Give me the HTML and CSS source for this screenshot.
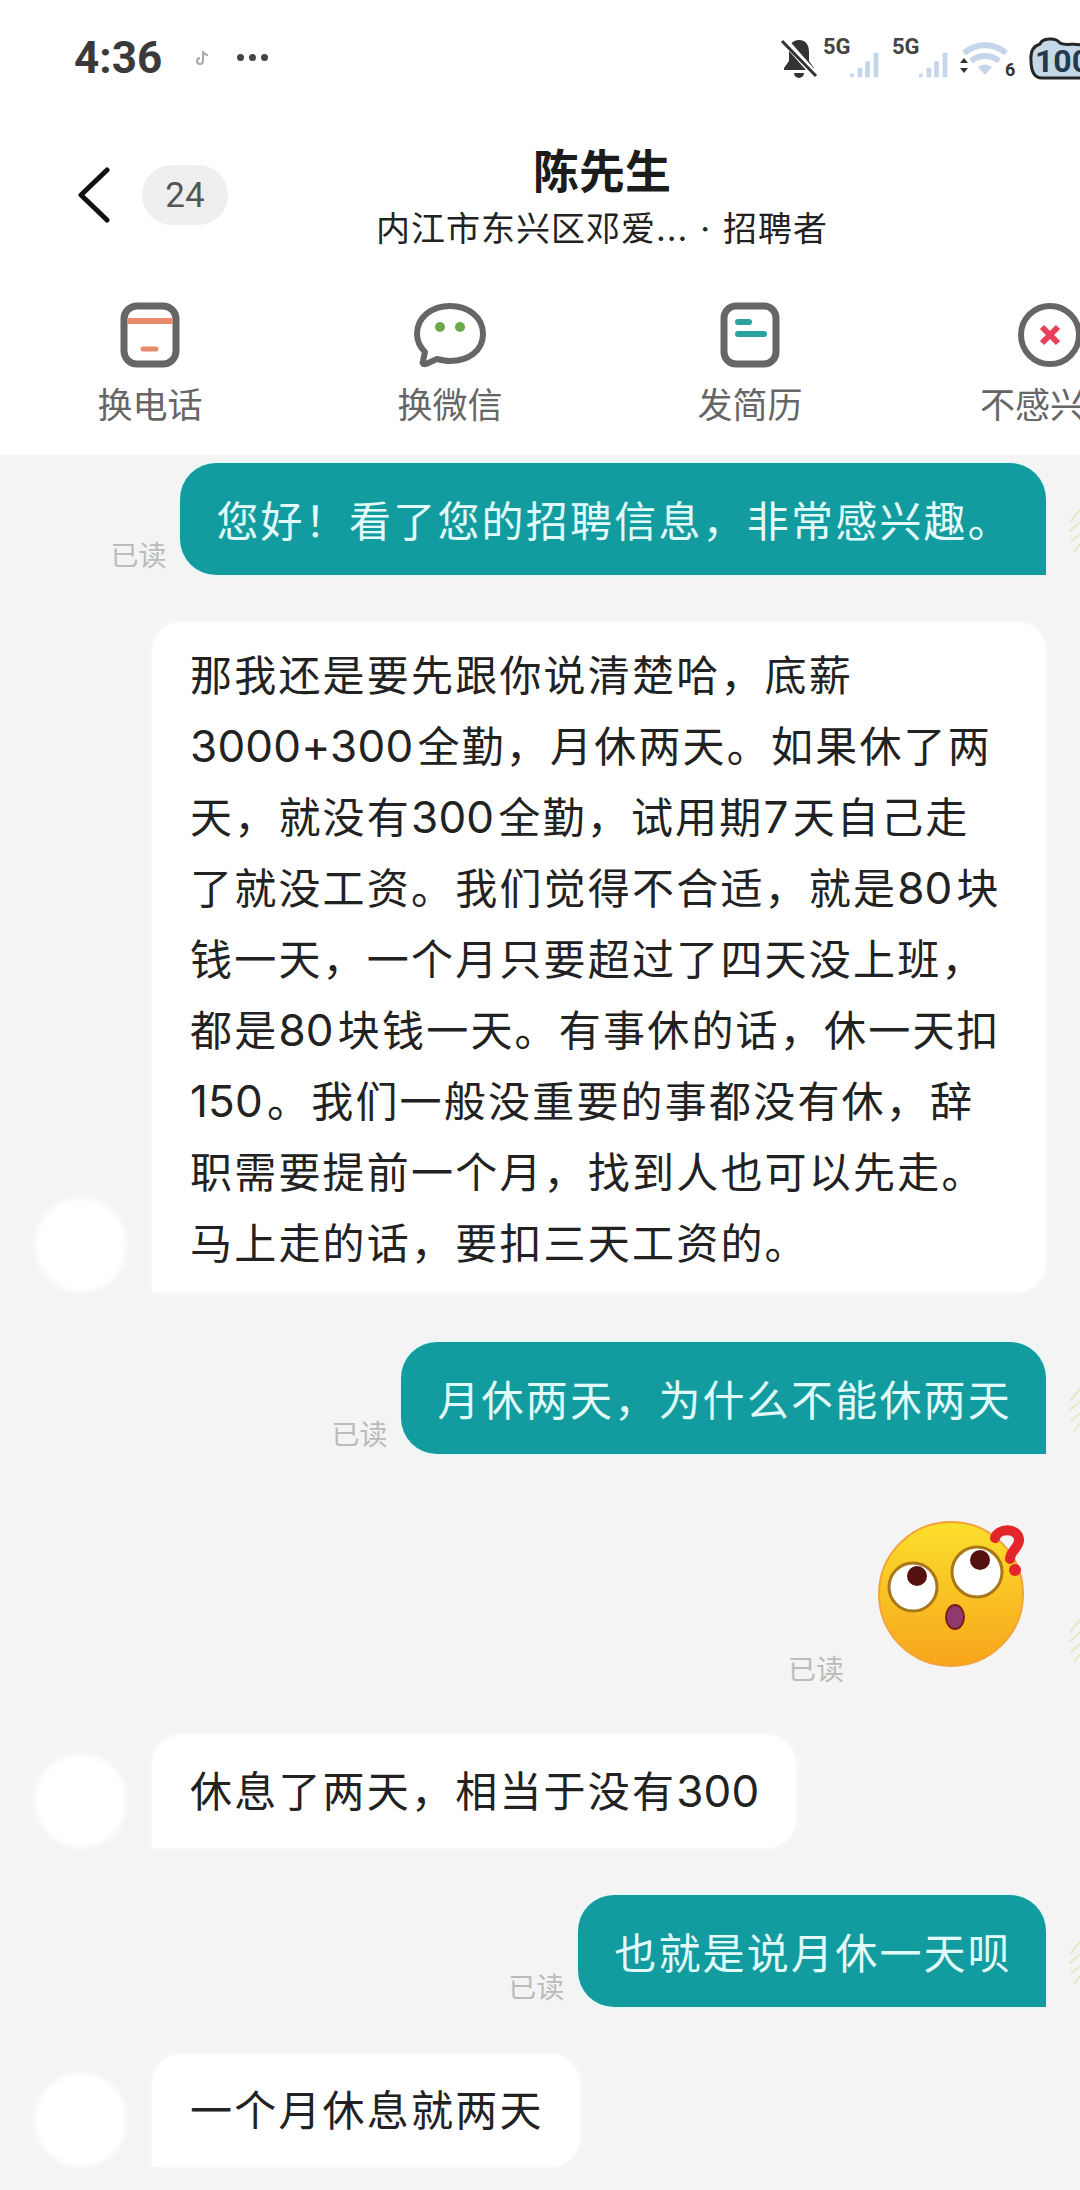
FILE: index.html
```html
<!DOCTYPE html>
<html lang="zh-CN">

<head>
    <meta charset="UTF-8">
    <meta name="viewport" content="width=device-width, initial-scale=1.0">
    <title>陈先生</title>
    <link rel="stylesheet" href="styles.css">
</head>

<body>
    <!-- 状态栏 -->
    <div class="status">
        <span class="time">4:36</span>
        <svg class="note" width="16" height="18" viewBox="0 0 16 18">
            <path d="M9 2v10a3 3 0 1 1-3-3M9 2c1 3 3 4 5 4" fill="none" stroke="#aaa" stroke-width="2"/>
        </svg>
        <span class="dots"><i></i><i></i><i></i></span>
        <div class="status-right">
            <svg class="bell" width="38" height="42" viewBox="0 0 36 42">
                <path d="M18 3c-7 0-10 5-10 12v9l-5 7v2h30v-2l-5-7v-9c0-7-3-12-10-12z" fill="#333"/>
                <path d="M13 36a5 5 0 0 0 10 0z" fill="#333"/>
                <path d="M2 2l32 36" stroke="#fff" stroke-width="7"/>
                <path d="M1 4l34 35" stroke="#333" stroke-width="3"/>
            </svg>
            <div class="sig">
                <span>5G</span>
                <svg width="33" height="28" viewBox="0 0 33 28">
                    <path d="M2 23h4v4H2zM10 17h5v10h-5zM18 10h5v17h-5zM27 1h5v26h-5z" fill="#c6d6ea"/>
                </svg>
            </div>
            <div class="sig">
                <span>5G</span>
                <svg width="33" height="28" viewBox="0 0 33 28">
                    <path d="M2 23h4v4H2zM10 17h5v10h-5zM18 10h5v17h-5zM27 1h5v26h-5z" fill="#c6d6ea"/>
                </svg>
            </div>
            <svg class="wifi" width="58" height="38" viewBox="0 0 58 38">
                <path d="M7 14a32 32 0 0 1 42 0M14 22a22 22 0 0 1 28 0" fill="none" stroke="#c6d6ea" stroke-width="6"/>
                <path d="M21 28a11 11 0 0 1 14 0l-7 8z" fill="#c6d6ea"/>
                <path d="M3 24l4-5 4 5zM3 29l4 5 4-5z" fill="#333"/>
                <text x="48" y="37" class="wifi-num">6</text>
            </svg>
            <div class="battery">
                <svg width="52" height="44" viewBox="0 0 52 44">
                    <path d="M3 24C2 14 6 10 12 8 14 2 28 1 32 7 38 10 45 7 54 9V42H14C6 42 3 34 3 24z" fill="#c5d8e8" stroke="#262626" stroke-width="3"/>
                </svg>
                <span>100</span>
            </div>
        </div>
    </div>

    <!-- 标题 -->
    <div class="header">
        <div class="back-group">
            <svg width="32" height="56" viewBox="0 0 32 56">
                <path d="M29 3L3 28l26 25" fill="none" stroke="#111" stroke-width="5" stroke-linecap="round" stroke-linejoin="round"/>
            </svg>
            <span class="badge">24</span>
        </div>
        <div class="title">
            <div class="name">陈先生</div>
            <div class="sub">内江市东兴区邓爱...<span class="sep">·</span>招聘者</div>
        </div>
    </div>

    <!-- 操作栏 -->
    <div class="actions">
        <div class="action">
            <svg width="60" height="66" viewBox="0 0 60 66">
                <rect x="4" y="4" width="52" height="58" rx="13" fill="none" stroke="#666" stroke-width="7"/>
                <path d="M7 19h46" stroke="#e88a6c" stroke-width="6"/>
                <path d="M23 47h13" stroke="#e88a6c" stroke-width="5" stroke-linecap="round"/>
            </svg>
            <span>换电话</span>
        </div>
        <div class="action">
            <svg width="74" height="66" viewBox="0 0 74 66">
                <path d="M37 4c18 0 33 11 33 28S55 59 37 59c-5 0-9-1-13-2l-11 5c-3 1-4-1-3-3l2-9C7 45 4 39 4 32 4 15 19 4 37 4z" fill="none" stroke="#666" stroke-width="6" stroke-linejoin="round"/>
                <circle cx="27" cy="25" r="5" fill="#6aaa4a"/>
                <circle cx="47" cy="25" r="5" fill="#6aaa4a"/>
            </svg>
            <span>换微信</span>
        </div>
        <div class="action">
            <svg width="60" height="66" viewBox="0 0 60 66">
                <rect x="4" y="4" width="52" height="58" rx="12" fill="none" stroke="#666" stroke-width="7"/>
                <path d="M18 20h11M18 32h26" stroke="#2aa29f" stroke-width="6" stroke-linecap="round"/>
            </svg>
            <span>发简历</span>
        </div>
        <div class="action">
            <svg width="66" height="66" viewBox="0 0 66 66">
                <circle cx="33" cy="33" r="29" fill="none" stroke="#666" stroke-width="6"/>
                <path d="M25 25l16 16M41 25L25 41" stroke="#e8405a" stroke-width="6"/>
            </svg>
            <span>不感兴趣</span>
        </div>
    </div>

    <!-- 聊天内容 -->
    <div class="chat">
        <div class="row me">
            <span class="read">已读</span>
            <div class="bubble">您好！看了您的招聘信息，非常感兴趣。</div>
            <svg class="leaf" width="12" height="46" viewBox="0 0 12 46">
                <path d="M12 2L2 14M12 14L1 24M12 26L3 34M12 36L6 44" stroke="#e6e8c4" stroke-width="2" fill="none"/>
            </svg>
        </div>

        <div class="row other row-long">
            <div class="avatar"></div>
            <div class="bubble bubble-long">那我还是要先跟你说清楚哈，底薪<br><span class="num">3000+300</span>全勤，月休两天。如果休了两<br>天，就没有<span class="num">300</span>全勤，试用期<span class="num">7</span>天自己走<br>了就没工资。我们觉得不合适，就是<span class="num">80</span>块<br>钱一天，一个月只要超过了四天没上班，<br>都是<span class="num">80</span>块钱一天。有事休的话，休一天扣<br><span class="num">150</span>。我们一般没重要的事都没有休，辞<br>职需要提前一个月，找到人也可以先走。<br>马上走的话，要扣三天工资的。</div>
        </div>

        <div class="row me">
            <span class="read">已读</span>
            <div class="bubble">月休两天，为什么不能休两天</div>
            <svg class="leaf" width="12" height="46" viewBox="0 0 12 46">
                <path d="M12 2L2 14M12 14L1 24M12 26L3 34M12 36L6 44" stroke="#e6e8c4" stroke-width="2" fill="none"/>
            </svg>
        </div>

        <div class="row me row-sticker">
            <span class="read read-low">已读</span>
            <svg class="sticker" width="150" height="150" viewBox="0 0 150 150">
                <defs>
                    <linearGradient id="face" x1="0" y1="0" x2="0" y2="1">
                        <stop offset="0" stop-color="#fbdf2c"/>
                        <stop offset="1" stop-color="#f8a51c"/>
                    </linearGradient>
                </defs>
                <circle cx="74" cy="76" r="72" fill="url(#face)" stroke="#f2a33a" stroke-width="2"/>
                <circle cx="36" cy="69" r="24" fill="#fff" stroke="#a9761a" stroke-width="3"/>
                <circle cx="40" cy="58" r="10" fill="#55110f"/>
                <circle cx="100" cy="54" r="25" fill="#fff" stroke="#a9761a" stroke-width="3"/>
                <circle cx="103" cy="42" r="10" fill="#55110f"/>
                <ellipse cx="78" cy="99" rx="9" ry="12" fill="#8e3a6b" stroke="#7a1d1d" stroke-width="2"/>
                <path d="M118 20c3-10 22-11 24 1 1 8-9 12-9 20" fill="none" stroke="#e5252c" stroke-width="10" stroke-linecap="round"/>
                <circle cx="138" cy="52" r="6" fill="#e5252c"/>
            </svg>
            <svg class="leaf leaf-low" width="12" height="46" viewBox="0 0 12 46">
                <path d="M12 2L2 14M12 14L1 24M12 26L3 34M12 36L6 44" stroke="#e6e8c4" stroke-width="2" fill="none"/>
            </svg>
        </div>

        <div class="row other">
            <div class="avatar"></div>
            <div class="bubble">休息了两天，相当于没有<span class="num">300</span></div>
        </div>

        <div class="row me">
            <span class="read">已读</span>
            <div class="bubble">也就是说月休一天呗</div>
            <svg class="leaf" width="12" height="46" viewBox="0 0 12 46">
                <path d="M12 2L2 14M12 14L1 24M12 26L3 34M12 36L6 44" stroke="#e6e8c4" stroke-width="2" fill="none"/>
            </svg>
        </div>

        <div class="row other">
            <div class="avatar"></div>
            <div class="bubble">一个月休息就两天</div>
        </div>
    </div>
</body>

</html>
```

FILE: styles.css
```css
html,
body {
    margin: 0;
    height: 2190px;
    overflow: hidden;
}

body {
    background-color: #fff;
    font-family: "Inter", "Noto Sans CJK SC", sans-serif;
    color: #222;
}

/* 状态栏 */
.status {
    display: flex;
    align-items: center;
    height: 115px;
    padding-left: 74px;
}

.time {
    font-family: "Roboto", sans-serif;
    font-size: 44px;
    font-weight: 700;
    color: #3a3a3a;
}

.note {
    margin-left: 32px;
}

.dots {
    display: flex;
    gap: 5px;
    margin-left: 27px;
}

.dots i {
    width: 7px;
    height: 7px;
    border-radius: 50%;
    background-color: #444;
}

.status-right {
    display: flex;
    align-items: center;
    margin-left: auto;
}

.sig {
    display: flex;
    width: 56px;
    height: 42px;
    margin-left: 5px;
}

.sig + .sig {
    margin-left: 13px;
}

.sig span {
    font-family: "Roboto", sans-serif;
    font-size: 22px;
    font-weight: 700;
    line-height: 20px;
    color: #444;
}

.sig svg {
    align-self: flex-end;
    margin-left: -3px;
}

.wifi {
    margin-left: 9px;
}

.wifi-num {
    font-family: "Roboto", sans-serif;
    font-size: 18px;
    font-weight: 700;
    fill: #333;
}

.battery {
    position: relative;
    width: 52px;
    height: 44px;
    margin-left: 13px;
    overflow: hidden;
}

.battery svg {
    position: absolute;
    top: 0;
    left: 0;
}

.battery span {
    position: relative;
    display: block;
    padding-left: 7px;
    font-family: "Roboto", sans-serif;
    font-size: 32px;
    font-weight: 700;
    line-height: 50px;
    color: #23394d;
    white-space: nowrap;
}

/* 标题 */
.header {
    display: flex;
    align-items: flex-start;
    height: 160px;
    padding-top: 27px;
}

.back-group {
    display: flex;
    align-items: center;
    width: 228px;
    flex-shrink: 0;
    padding-left: 78px;
    margin-top: 23px;
    box-sizing: border-box;
}

.badge {
    display: flex;
    justify-content: center;
    align-items: center;
    width: 86px;
    height: 60px;
    margin-left: 32px;
    border-radius: 30px;
    background-color: #efefef;
    font-family: "Roboto", sans-serif;
    font-size: 35px;
    color: #555;
}

.title {
    width: 748px;
    flex-shrink: 0;
    text-align: center;
    white-space: nowrap;
}

.name {
    font-size: 46px;
    font-weight: 700;
    line-height: 58px;
    color: #1c1c1c;
}

.sub {
    font-size: 34px;
    line-height: 58px;
    letter-spacing: 1px;
    color: #222;
}

.sep {
    margin: 0 12px;
}

/* 操作栏 */
.actions {
    display: flex;
    padding-bottom: 27px;
    overflow: hidden;
}

.action {
    display: flex;
    flex-direction: column;
    align-items: center;
    flex: 0 0 300px;
}

.action svg {
    height: 66px;
}

.action span {
    margin-top: 14px;
    font-size: 35px;
    line-height: 46px;
    color: #666;
    white-space: nowrap;
}

/* 聊天内容 */
.chat {
    display: flex;
    flex-direction: column;
    gap: 47px;
    min-height: 1735px;
    padding-top: 8px;
    box-sizing: border-box;
    background-color: #f4f4f5;
}

.row {
    position: relative;
    display: flex;
    align-items: flex-end;
}

.row.me {
    justify-content: flex-end;
    padding-right: 34px;
}

.row.other {
    padding-left: 35px;
    padding-right: 34px;
}

.bubble {
    padding: 23px 34px 18px 36px;
    font-size: 42px;
    line-height: 71px;
    letter-spacing: 2.2px;
    white-space: nowrap;
}

.num {
    margin-right: 4px;
    font-size: 44px;
    letter-spacing: 0.2px;
}

.num:last-child {
    margin-right: 0;
}

.me .bubble {
    border-radius: 36px 36px 0 36px;
    background-color: #139ca0;
    box-shadow: 0 0 4px #d8fbf8;
    color: #e2fbf9;
}

.other .bubble {
    margin-left: 25px;
    padding: 21px 36px 21px 38px;
    border-radius: 30px 30px 30px 0;
    background-color: #fff;
    box-shadow: 0 0 6px #fff;
    color: #222;
}

.other .bubble-long {
    flex: 1;
    padding: 18px 36px 13px 38px;
}

.row-long {
    margin-bottom: 3px;
}

.avatar {
    width: 92px;
    height: 94px;
    flex-shrink: 0;
    border-radius: 50%;
    background-color: #fff;
    filter: blur(3px);
}

.read {
    margin: 0 14px 1px 0;
    font-size: 28px;
    line-height: 36px;
    color: #bbb;
}

.row-sticker {
    margin: 17px 0 20px;
}

.row.row-sticker {
    padding-right: 53px;
}

.read-low {
    margin: 0 33px -20px 0;
}

.sticker {
    display: block;
}

.leaf {
    position: absolute;
    top: 45px;
    right: 0;
}

.leaf-low {
    top: 100px;
}
```
